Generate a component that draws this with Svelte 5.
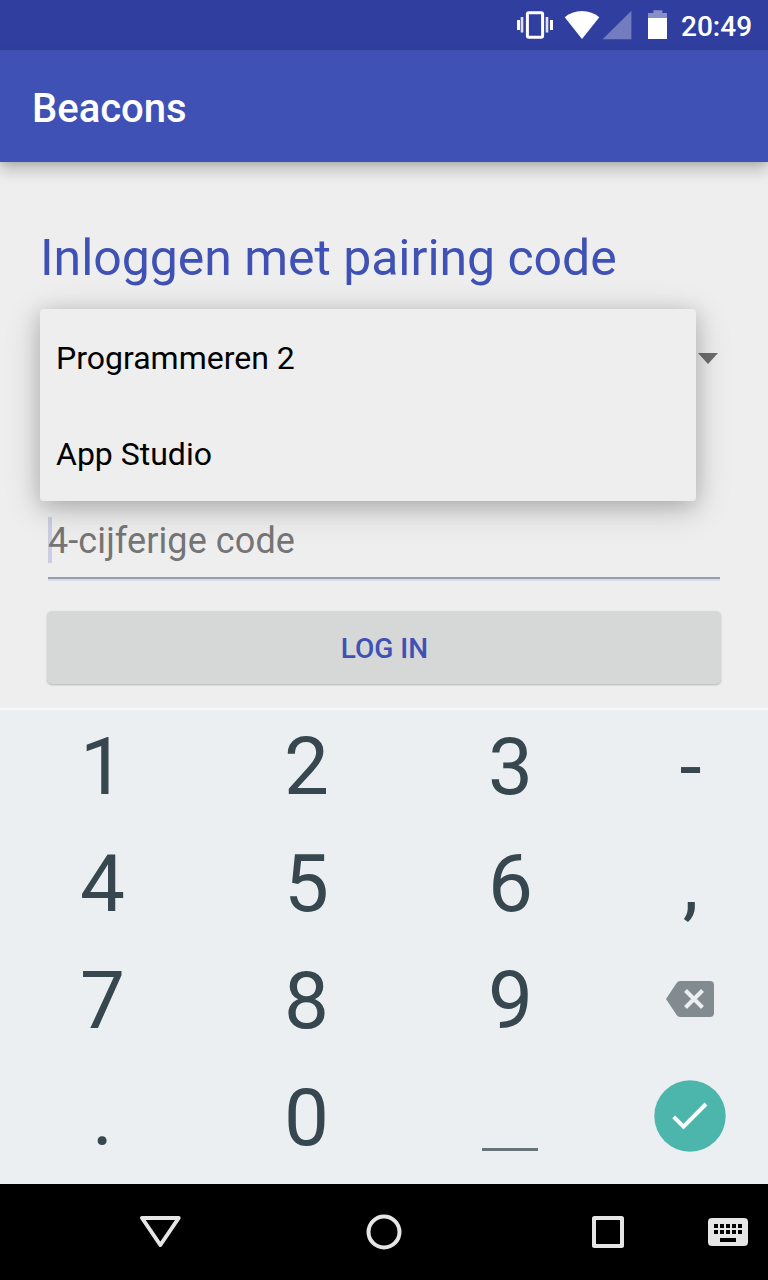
<script>
  const courses = ['Programmeren 2', 'App Studio'];
  const keys = ['1', '2', '3', '-', '4', '5', '6', ',', '7', '8', '9', 'delete', '.', '0', 'space', 'done'];
</script>

<div class="screen">
  <header class="status">
    <svg width="164" height="50" viewBox="512 0 164 50" aria-hidden="true">
      <rect x="527.4" y="12.8" width="15.2" height="24.4" rx="1.5" fill="none" stroke="#fff" stroke-width="3" />
      <path d="M517 20h3v10h-3zM550 20h3v10h-3z" fill="#fff" />
      <path d="M520.700 17h2.600v15.600h-2.600zM545.700 17h2.600v15.600h-2.600z" fill="#fff" opacity=".85" />
      <path d="M582 39 564.7 17.2C569.4 13.3 575.2 11 582 11s12.6 2.3 17.3 6.2z" fill="#fff" />
      <path d="M631.4 10.7v28.6h-28.800z" fill="#fff" opacity=".32" />
      <path d="M648 18v-5h5.3v-2.8h9V13h4.7v5z" fill="#fff" opacity=".42" />
      <path d="M648 18h19v21h-19z" fill="#fff" />
    </svg>
    <span class="clock">20:49</span>
  </header>

  <div class="appbar"><h1>Beacons</h1></div>

  <main>
    <h2>Inloggen met pairing code</h2>
    <div class="spinner">
      <svg class="arrow" width="20" height="11" viewBox="0 0 20 11" aria-hidden="true"><path d="M0 0h20L10 11z" fill="#6e6e6e" /></svg>
      <ul class="popup">
        {#each courses as course}
          <li>{course}</li>
        {/each}
      </ul>
    </div>
    <div class="field"><span class="cursor"></span><span class="hint">4-cijferige code</span></div>
    <button class="login">LOG IN</button>
  </main>

  <section class="keyboard">
    {#each keys as key}
      {#if key === 'delete'}
        <div class="key icon">
          <svg width="48" height="36" viewBox="0 0 48 36" aria-hidden="true">
            <path d="M14 0h30a4 4 0 0 1 4 4v28a4 4 0 0 1-4 4H14q-2 0-3.2-1.8L0 18 10.800 1.800Q12 0 14 0z" fill="#828c90" />
            <path d="m19.500 9.500 17 17m0-17-17 17" stroke="#ebeff2" stroke-width="4" />
          </svg>
        </div>
      {:else if key === 'done'}
        <div class="key icon">
          <svg width="72" height="72" viewBox="0 0 72 72" aria-hidden="true">
            <circle cx="36" cy="36" r="35.700" fill="#4db6ac" />
            <path d="m19.700 36.900 9.800 9.800 22.500-22.700" fill="none" stroke="#fff" stroke-width="4" />
          </svg>
        </div>
      {:else if key === 'space'}
        <div class="key icon"><span class="space"></span></div>
      {:else}
        <div class="key">{key}</div>
      {/if}
    {/each}
  </section>

  <nav>
    <svg width="768" height="96" viewBox="0 0 768 96" aria-hidden="true">
      <g fill="none" stroke="#e6e6e6" stroke-width="4" stroke-linejoin="round">
        <path d="M142 34h36.700L160.350 61z" />
        <circle cx="384" cy="48" r="15.500" />
        <rect x="594" y="34" width="28" height="28" rx=".5" />
      </g>
      <rect x="708" y="34" width="40" height="28" rx="4" fill="#e6e6e6" />
      <path d="M714 40h4v4h-4zm6 0h4v4h-4zm6 0h4v4h-4zm6 0h4v4h-4zm6 0h4v4h-4zM714 46h4v4h-4zm6 0h4v4h-4zm6 0h4v4h-4zm6 0h4v4h-4zm6 0h4v4h-4zM720 54h16v4h-16z" />
    </svg>
  </nav>
</div>

<style>
  :global(body) { margin: 0; }
  .screen {
    width: 768px;
    height: 1280px;
    display: flex;
    flex-direction: column;
    overflow: hidden;
    background: #eee;
    font-family: Roboto, sans-serif;
  }
  svg { display: block; flex: none; }
  .status {
    height: 50px;
    display: flex;
    justify-content: flex-end;
    background: #303f9f;
    color: #fff;
  }
  .clock {
    width: 92px;
    padding-left: 5px;
    box-sizing: border-box;
    font-size: 28px;
    font-weight: 500;
    line-height: 53px;
    white-space: nowrap;
  }
  .appbar {
    height: 112px;
    box-sizing: border-box;
    padding: 5px 32px 0;
    background: #3f51b5;
    color: #fff;
    box-shadow: 0 8px 14px rgba(0, 0, 0, .22), 0 2px 4px rgba(0, 0, 0, .07);
  }
  h1 { margin: 0; font-size: 40px; font-weight: 500; line-height: 108px; height: 107px; }
  main { height: 546px; padding: 66px 40px 0; box-sizing: border-box; }
  h2 {
    margin: 0;
    color: #3f51b5;
    font-size: 50px;
    font-weight: 400;
    line-height: 60px;
    letter-spacing: -.04px;
    white-space: nowrap;
  }
  .spinner {
    position: relative;
    z-index: 1;
    height: 96px;
    margin-top: 21px;
    display: flex;
    align-items: center;
    justify-content: flex-end;
  }
  .arrow { margin-right: 10px; margin-top: 2px; }
  .popup {
    position: absolute;
    top: 0;
    left: 0;
    width: 656px;
    height: 192px;
    margin: 0;
    padding: 0;
    list-style: none;
    border-radius: 4px;
    background: #eee;
    box-shadow: 0 8px 36px rgba(0, 0, 0, .19), 0 4px 20px rgba(0, 0, 0, .16);
  }
  .popup li { padding: 0 16px; font-size: 32px; line-height: 98px; height: 96px; color: #000; }
  .field {
    display: flex;
    align-items: center;
    height: 74px;
    margin: 98px 8px 0;
    border-bottom: 2px solid #9a9cab;
    box-shadow: 0 2px #d8dcec;
  }
  .cursor { width: 4px; height: 46px; margin-right: -4px; background: rgba(63, 81, 181, .2); }
  .hint { padding-top: 2px; color: #757575; font-size: 36px; letter-spacing: .09px; }
  .login {
    display: block;
    width: 674px;
    height: 73px;
    margin: 32px 7px 0;
    padding: 1px 0 0 1px;
    border: 0;
    border-radius: 5px;
    background: #d6d8d7;
    box-shadow: 0 1px 2px rgba(0, 0, 0, .25);
    color: #3f51b5;
    font: 500 28px Roboto, sans-serif;
  }
  .keyboard {
    height: 476px;
    box-sizing: border-box;
    padding-bottom: 8px;
    display: grid;
    grid-template-columns: 204px 204px 204px 156px;
    grid-template-rows: repeat(4, 117px);
    background: #ebeff2;
    box-shadow: inset 0 2px #f6f8f9;
    color: #37474f;
  }
  .key {
    box-sizing: border-box;
    height: 117px;
    padding: 2px 0 0 1px;
    display: flex;
    align-items: center;
    justify-content: center;
    font-size: 80px;
    line-height: 117px;
  }
  .key.icon { padding: 0 0 3px; }
  .space { width: 56px; height: 3px; margin-top: 67px; background: #667479; }
  nav { height: 96px; background: #000; }
</style>
